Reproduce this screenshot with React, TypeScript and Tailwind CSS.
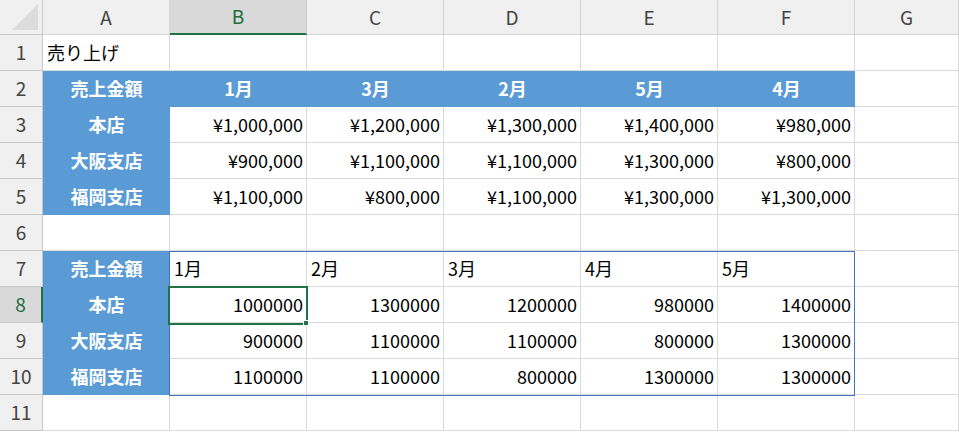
import React from "react";

const cols = ["A", "B", "C", "D", "E", "F", "G"];
type C = { t: string; h?: boolean; a?: "l" | "c" | "r" };
const H = (t: string): C => ({ t, h: true, a: "c" });
const R = (t: string): C => ({ t, a: "r" });
const L = (t: string): C => ({ t, a: "l" });
const E: C = { t: "" };

const rows: C[][] = [
  [L("売り上げ"), E, E, E, E, E, E],
  [H("売上金額"), H("1月"), H("3月"), H("2月"), H("5月"), H("4月"), E],
  [H("本店"), R("¥1,000,000"), R("¥1,200,000"), R("¥1,300,000"), R("¥1,400,000"), R("¥980,000"), E],
  [H("大阪支店"), R("¥900,000"), R("¥1,100,000"), R("¥1,100,000"), R("¥1,300,000"), R("¥800,000"), E],
  [H("福岡支店"), R("¥1,100,000"), R("¥800,000"), R("¥1,100,000"), R("¥1,300,000"), R("¥1,300,000"), E],
  [E, E, E, E, E, E, E],
  [H("売上金額"), L("1月"), L("2月"), L("3月"), L("4月"), L("5月"), E],
  [H("本店"), R("1000000"), R("1300000"), R("1200000"), R("980000"), R("1400000"), E],
  [H("大阪支店"), R("900000"), R("1100000"), R("1100000"), R("800000"), R("1300000"), E],
  [H("福岡支店"), R("1100000"), R("1100000"), R("800000"), R("1300000"), R("1300000"), E],
  [E, E, E, E, E, E, E],
];

export default function App() {
  return (
    <div
      className="relative w-[959px] h-[432px] overflow-hidden bg-white text-[18px] text-black"
      style={{ fontFamily: '"Noto Sans CJK JP", "Noto Sans", sans-serif' }}
    >
      <div className="grid grid-cols-[43px_127px_137px_137px_137px_137px_137px_1fr] grid-rows-[35px_repeat(11,36px)]">
        <div className="bg-[#f0f0f0] border-r border-b border-[#c8c8c8] relative">
          <div className="absolute right-[4px] bottom-[4px] w-0 h-0 border-l-[26px] border-l-transparent border-b-[26px] border-b-[#dcdcdc]" />
        </div>
        {cols.map((c) => (
          <div
            key={c}
            className={
              c === "B"
                ? "flex items-center justify-center bg-[#d9d9d9] border-r border-[#c8c8c8] border-b-2 border-b-[#217346] text-[#1e6b3f] text-[19px]"
                : "flex items-center justify-center bg-[#f0f0f0] border-r border-b border-[#d4d4d4] text-[#444] text-[19px]"
            }
          >
            {c}
          </div>
        ))}
        {rows.map((r, i) => (
          <React.Fragment key={i}>
            <div
              className={
                i === 7
                  ? "flex items-center justify-center bg-[#d9d9d9] border-b border-[#c8c8c8] border-r-2 border-r-[#217346] text-[#1e6b3f] text-[19px]"
                  : "flex items-center justify-center bg-[#f0f0f0] border-r border-b border-[#c8c8c8] text-[#444] text-[19px]"
              }
            >
              {i + 1}
            </div>
            {r.map((c, j) => (
              <div
                key={j}
                className={
                  (c.h
                    ? "bg-[#5b9bd5] text-white font-bold border-[#5b9bd5] border-b "
                    : "border-r border-b border-[#dadada] ") +
                  (c.a === "r"
                    ? "flex items-center justify-end pr-[3px]"
                    : c.a === "c"
                    ? "flex items-center justify-center"
                    : "flex items-center pl-[4px]")
                }
              >
                {c.t}
              </div>
            ))}
          </React.Fragment>
        ))}
      </div>
      <div className="absolute left-[169px] top-[251px] w-[686px] h-[145px] border border-[#4472c4] pointer-events-none" />
      <div className="absolute left-[168px] top-[286px] w-[140px] h-[39px] border-2 border-[#217346]" />
      <div className="absolute left-[303px] top-[320px] w-[6px] h-[6px] bg-[#217346] border border-white" />
    </div>
  );
}
